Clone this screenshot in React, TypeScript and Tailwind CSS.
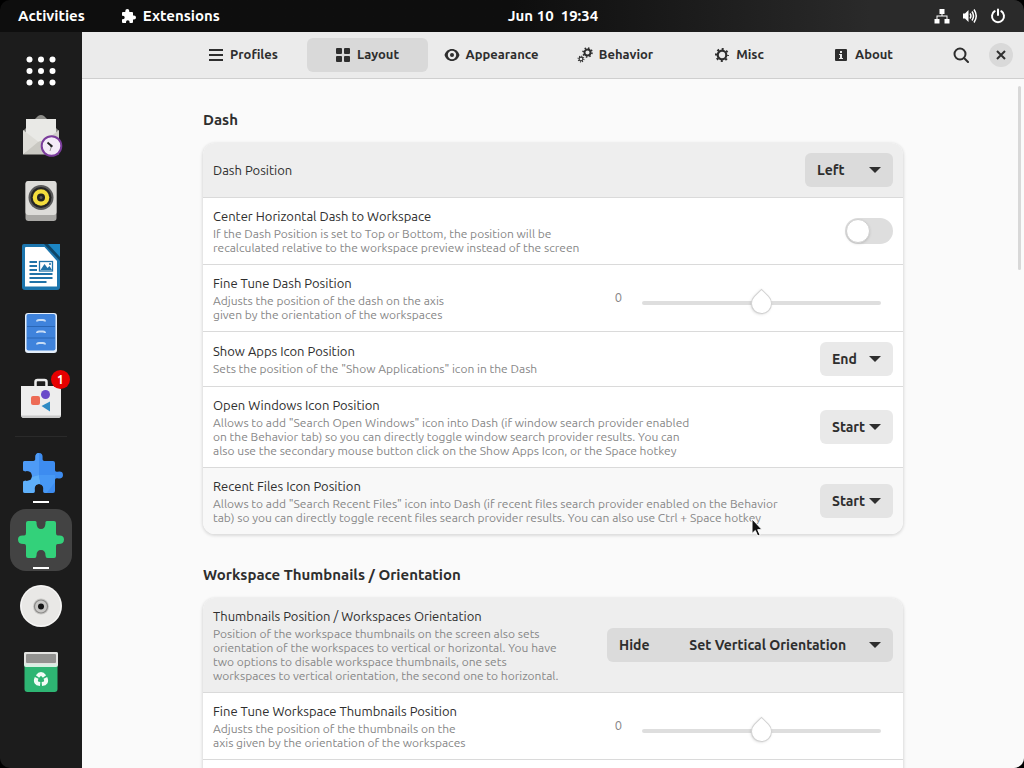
import React, { useState } from 'react';

const DASH_POSITIONS = ['Left', 'Right', 'Top', 'Bottom'];
const ICON_POSITIONS = ['Start', 'End', 'Hide'];
const THUMBNAIL_POSITIONS = [
  'Left',
  'Right',
  'Hide' + '\u00a0'.repeat(12) + 'Set Vertical Orientation',
  'Hide' + '\u00a0'.repeat(12) + 'Set Horizontal Orientation',
];

// ---------- Symbolic icons ----------

const PuzzleIcon = () => (
  <svg viewBox="0 0 16 16" className="size-4" fill="currentColor">
    <path d="M6.3 1a2 2 0 0 1 2 2v1H11a1 1 0 0 1 1 1v2.6h1a2 2 0 0 1 0 4h-1V14a1 1 0 0 1-1 1H8.600v-.9a1.800 1.800 0 0 0-3.600 0v.9H2a1 1 0 0 1-1-1v-2.700h.9a1.800 1.800 0 0 0 0-3.600H1V5a1 1 0 0 1 1-1h2.300V3a2 2 0 0 1 2-2z" />
  </svg>
);

const MenuIcon = () => (
  <svg viewBox="0 0 16 16" className="size-4" fill="currentColor">
    <path d="M1 2h14v2H1zM1 7h14v2H1zM1 12h14v2H1z" />
  </svg>
);

const GridIcon = () => (
  <svg viewBox="0 0 16 16" className="size-4" fill="currentColor">
    <rect x="1" y="1" width="6" height="6" rx="1" />
    <rect x="9" y="1" width="6" height="6" rx="1" />
    <rect x="1" y="9" width="6" height="6" rx="1" />
    <rect x="9" y="9" width="6" height="6" rx="1" />
  </svg>
);

const EyeIcon = () => (
  <svg viewBox="0 0 16 16" className="size-4" fill="currentColor">
    <path fillRule="evenodd" d="M8 2C4.500 2 1.600 4.200.5 8c1.100 3.800 4 6 7.500 6s6.400-2.200 7.500-6C14.400 4.200 11.500 2 8 2zm0 1.800a4.200 4.200 0 1 1 0 8.400 4.200 4.200 0 0 1 0-8.400z" />
    <circle cx="8" cy="8" r="2" />
  </svg>
);

const GearsIcon = () => (
  <svg viewBox="0 0 16 16" className="size-4" fill="none" stroke="currentColor">
    <circle cx="10.500" cy="5.500" r="3" strokeWidth="1.900" />
    <circle cx="10.500" cy="5.500" r="4.500" strokeWidth="1.600" strokeDasharray="1.500 2.034" />
    <circle cx="4" cy="12" r="1.900" strokeWidth="1.100" />
    <circle cx="4" cy="12" r="2.900" strokeWidth="1.100" strokeDasharray="1 1.277" />
  </svg>
);

const GearIcon = () => (
  <svg viewBox="0 0 16 16" className="size-4" fill="none" stroke="currentColor">
    <circle cx="8" cy="8" r="4.300" strokeWidth="2.200" />
    <circle cx="8" cy="8" r="6" strokeWidth="2" strokeDasharray="2 2.712" strokeDashoffset="1" />
  </svg>
);

const InfoIcon = () => (
  <svg viewBox="0 0 16 16" className="size-4">
    <rect x="2" y="2" width="12" height="12" rx="1" fill="currentColor" />
    <path d="M7 4h2v2H7zM6 7h3v4h1v1H6v-1h1V8H6z" fill="#ebebeb" />
  </svg>
);

const SearchIcon = () => (
  <svg viewBox="0 0 16 16" className="size-4" fill="none" stroke="currentColor" strokeWidth="2">
    <circle cx="7" cy="7" r="5.500" />
    <path d="M11 11l4 4" strokeLinecap="round" />
  </svg>
);

const NetworkIcon = () => (
  <svg viewBox="0 0 16 16" className="size-4" fill="currentColor">
    <path d="M5.500 1h5v5H8.500v1.500h5V11H15.500v4.500h-5V11h2V8.500h-9V11h2v4.500h-5V11h2V7.500h5V6h-2z" />
  </svg>
);

const VolumeIcon = () => (
  <svg viewBox="0 0 16 16" className="size-4" fill="none" stroke="currentColor" strokeWidth="1.500">
    <path d="M1 5.500h2L6.500 2v12L3 10.500H1z" fill="currentColor" stroke="none" />
    <path d="M8 5.500q1.800 2.500 0 5M10 3.500q3 4.500 0 9M12 1.500q4.500 6.500 0 13" />
  </svg>
);

const PowerIcon = () => (
  <svg viewBox="0 0 16 16" className="size-4" fill="none" stroke="currentColor" strokeWidth="2" strokeLinecap="round">
    <path d="M4.700 3.200a6 6 0 1 0 6.600 0M8 1.500v5.500" />
  </svg>
);

// ---------- Dash icons ----------

const AppsIcon = () => (
  <svg viewBox="0 0 48 48" className="size-12" fill="#fff">
    {[12.500, 24, 35.500].map((y) =>
      [12.500, 24, 35.500].map((x) => <circle key={`${x}-${y}`} cx={x} cy={y + 1} r="3" />)
    )}
  </svg>
);

const MailIcon = () => (
  <svg viewBox="0 0 48 48" className="size-12">
    <path d="M6 20L21 5q3-2 6 0l15 15v22a1 1 0 0 1-1 1H7a1 1 0 0 1-1-1z" fill="#8f8f8b" />
    <rect x="9" y="8" width="30" height="28" fill="#e9e9e6" />
    <path d="M6 19l17 13L6 43.500z" fill="#deddd8" />
    <path d="M42 19L25 32l17 11z" fill="#d0cfca" />
    <path d="M6 43.500L21 31q3-2 6 0l15 12.500z" fill="#c9c8c2" />
    <circle cx="34.500" cy="35" r="9.800" fill="#f4ecf8" stroke="#7b3d9c" strokeWidth="2" />
    <path d="M30.500 31.500l4 3.500" stroke="#222" strokeWidth="1.800" />
    <path d="M34.500 35l-1.500 5" stroke="#999" strokeWidth="1" />
    <circle cx="34.500" cy="35" r="1.200" fill="#222" />
  </svg>
);

const SpeakerIcon = () => (
  <svg viewBox="0 0 48 48" className="size-12">
    <rect x="8.500" y="4" width="31" height="40" rx="3" fill="#a9a8a5" />
    <rect x="8.500" y="4" width="31" height="34" rx="3" fill="#dddcd9" />
    <circle cx="24" cy="20.500" r="12.500" fill="#5a5a5a" />
    <circle cx="24" cy="20.500" r="10.500" fill="#252525" />
    <circle cx="24" cy="20.500" r="8.300" fill="#f4dd3d" />
    <circle cx="24" cy="20.500" r="4" fill="#222" />
    <circle cx="24" cy="20.500" r="1.500" fill="#555" />
  </svg>
);

const WriterIcon = () => (
  <svg viewBox="0 0 48 48" className="size-12">
    <path d="M7 1h22l14 15v28a3 3 0 0 1-3 3H8a3 3 0 0 1-3-3V3a2 2 0 0 1 2-2z" fill="#1c75ad" />
    <path d="M9 4h18.500L40 18v25.500H8V5a1 1 0 0 1 1-1z" fill="#fff" />
    <path d="M30 1h13v14z" fill="#1c86c4" />
    <path d="M27 1l16 17v-4L31 1z" fill="#0e4668" />
    <path d="M12.500 19h7.500M12.500 23h7.500M12.500 27h7.500M12.500 31h23M12.500 35h23M12.500 39h17" stroke="#2173a8" strokeWidth="1.800" />
    <rect x="22.500" y="18.500" width="13" height="9.500" fill="#fff" stroke="#2173a8" strokeWidth="1.300" />
    <path d="M23.500 27l4-6 3 4 2-2 2.500 4z" fill="#2173a8" />
    <circle cx="33" cy="21" r="1" fill="#2173a8" />
  </svg>
);

const CabinetIcon = () => (
  <svg viewBox="0 0 48 48" className="size-12">
    <rect x="8" y="4" width="32" height="40" rx="3" fill="#e4eefa" />
    <rect x="9.500" y="5" width="29" height="36.500" rx="2" fill="#3f83dc" />
    <path d="M10 17.500h28M10 29h28" stroke="#2a66b5" strokeWidth="1" />
    <path d="M20 12.500q0-1.500 2-1.500h4q2 0 2 1.500M20 24q0-1.500 2-1.500h4q2 0 2 1.500M20 35.500q0-1.500 2-1.500h4q2 0 2 1.500" fill="none" stroke="#c7dcf5" strokeWidth="2" />
  </svg>
);

const SoftwareIcon = () => (
  <svg viewBox="0 0 48 48" className="size-12">
    <path d="M18.500 12V7q0-2 2-2h7q2 0 2 2v5" fill="none" stroke="#ececec" strokeWidth="2.500" />
    <path d="M4 11h40v29a3 3 0 0 1-3 3H7a3 3 0 0 1-3-3z" fill="#ededed" />
    <path d="M4 40.500q1 2.500 3 2.500h34q2 0 3-2.500z" fill="#c9c9c9" />
    <rect x="14" y="21" width="9" height="9" rx="2" fill="#ed6b55" />
    <circle cx="28.500" cy="19.500" r="4.500" fill="#6a4bc9" />
    <path d="M33 26.500v10L24.500 31z" fill="#2f8bc4" />
  </svg>
);

const BLUE_PUZZLE =
  'M8 11h8.500q2.300 0 1.900-3Q18 3 22 3t3.600 5q-.4 3 1.900 3H36q2 0 2 2v7q0 2.300 2.500 1.700 5.500-1 5.500 3.300t-5.500 3.300Q38 27.700 38 30v11q0 2-2 2h-7.500q-2.500 0-2.200-2.500.7-6.500-4.300-6.500t-4.300 6.500q.3 2.500-2.200 2.500H8q-2 0-2-2v-8q0-2.500 2.500-2.200 6.500.7 6.500-4.800t-6.500-4.800Q6 21.500 6 19v-6q0-2 2-2z';

const BluePuzzleIcon = () => (
  <svg viewBox="0 0 48 48" className="size-12">
    <clipPath id="blue-puzzle">
      <path d={BLUE_PUZZLE} />
    </clipPath>
    <g clipPath="url(#blue-puzzle)">
      <rect width="48" height="48" fill="#3d8cf0" />
      <path d="M0 0h22v25L0 31z" fill="#4e9bf6" />
      <path d="M22 25L0 31v17h26z" fill="#5fb0fa" />
      <path d="M22 25h16v7L26 48z" fill="#4798f5" />
    </g>
  </svg>
);

const GreenPuzzleIcon = () => (
  <svg viewBox="0 0 48 48" className="size-12">
    <path d="M11 5h7q2 0 1.500 2.500Q20 13 24 13t4.500-5.500Q28 5 30 5h7q2 0 2 2v10q0 3 2.500 2.500Q47 19 47 23.500T41.500 28Q39 27.500 39 30v10q0 2-2 2h-6.500q-2 0-2-2.500 0-5.500-4.500-5.500t-4.500 5.500q0 2.500-2 2.500H11q-2 0-2-2V30q0-2.500-2.500-2Q1 28 1 23.500t5.500-4Q9 20 9 17V7q0-2 2-2z" fill="#33d17a" />
  </svg>
);

const DiscIcon = () => (
  <svg viewBox="0 0 48 48" className="size-12">
    <circle cx="24" cy="24" r="21" fill="#e9e8e6" />
    <circle cx="24" cy="24" r="20" fill="none" stroke="#fafafa" strokeWidth="1" />
    <circle cx="24" cy="24.500" r="8" fill="#c8c7c5" />
    <circle cx="24" cy="24.500" r="6.500" fill="none" stroke="#8c8b89" strokeWidth="1.200" />
    <circle cx="24" cy="24.500" r="3" fill="#161616" />
  </svg>
);

const TrashIcon = () => (
  <svg viewBox="0 0 48 48" className="size-12">
    <path d="M7.500 16h33v25a3 3 0 0 1-3 3h-27a3 3 0 0 1-3-3z" fill="#2eb573" />
    <rect x="7" y="4" width="34" height="15" rx="2" fill="#d8f0e3" />
    <rect x="7" y="4" width="34" height="12" rx="2" fill="#e3e3e1" />
    <rect x="9" y="6" width="30" height="9" rx="1" fill="#929290" />
    <g fill="none" stroke="#f2fbf6" strokeWidth="4">
      <path d="M20.500 28.500q3.500-5 7 0" />
      <path d="M20.500 28.500q3.500-5 7 0" transform="rotate(120 24 31.500)" />
      <path d="M20.500 28.500q3.500-5 7 0" transform="rotate(240 24 31.500)" />
    </g>
  </svg>
);

// ---------- Shell ----------

const TopBar: React.FC = () => (
  <header className="flex h-8 shrink-0 items-center bg-linear-to-r from-[#0e0e0e] from-50% to-[#2a2a2a] to-85% px-[18px] text-[15px] font-bold text-white">
    <div className="flex flex-1 items-center gap-9">
      <button>Activities</button>
      <button className="flex items-center gap-[6px]">
        <PuzzleIcon />
        Extensions
      </button>
    </div>
    <button className="ml-[82px] whitespace-pre">{'Jun 10  19:34'}</button>
    <button aria-label="System menu" className="flex flex-1 items-center justify-end gap-3">
      <NetworkIcon />
      <VolumeIcon />
      <PowerIcon />
    </button>
  </header>
);

type DashItemProps = {
  label: string;
  icon: React.ReactNode;
  running?: boolean;
  active?: boolean;
  badge?: number;
};

const DashItem: React.FC<DashItemProps> = ({ label, icon, running, active, badge }) => (
  <button
    aria-label={label}
    className={`relative flex size-[62px] shrink-0 items-center justify-center rounded-2xl ${active ? 'bg-[#434343]' : ''}`}
  >
    {icon}
    {badge && (
      <span className="absolute top-[2px] right-[2px] flex size-[19px] items-center justify-center rounded-full bg-[#e60000] text-xs font-bold text-white">
        {badge}
      </span>
    )}
    {running && <span className="absolute bottom-0.5 h-0.5 w-4 bg-white" />}
  </button>
);

const Dash: React.FC = () => (
  <nav className="flex w-[82px] shrink-0 flex-col items-center gap-1 bg-[#1c1c1c] pt-2">
    <button aria-label="Show Applications" className="flex h-[60px] w-[62px] items-center justify-center">
      <AppsIcon />
    </button>
    <DashItem label="Evolution" icon={<MailIcon />} />
    <DashItem label="Rhythmbox" icon={<SpeakerIcon />} />
    <DashItem label="LibreOffice Writer" icon={<WriterIcon />} />
    <DashItem label="Files" icon={<CabinetIcon />} />
    <DashItem label="Software" icon={<SoftwareIcon />} badge={1} />
    <div className="my-[2px] h-px w-[52px] shrink-0 bg-[#2a2a2a]" />
    <DashItem label="Extension Manager" icon={<BluePuzzleIcon />} running />
    <DashItem label="Extensions" icon={<GreenPuzzleIcon />} running active />
    <DashItem label="Disc" icon={<DiscIcon />} />
    <DashItem label="Trash" icon={<TrashIcon />} />
  </nav>
);

// ---------- Preferences window ----------

const TABS = [
  { name: 'Profiles', icon: <MenuIcon /> },
  { name: 'Layout', icon: <GridIcon /> },
  { name: 'Appearance', icon: <EyeIcon /> },
  { name: 'Behavior', icon: <GearsIcon /> },
  { name: 'Misc', icon: <GearIcon /> },
  { name: 'About', icon: <InfoIcon /> },
];

const WindowHeader: React.FC<{ tab: string; onSelect: (tab: string) => void }> = ({ tab, onSelect }) => (
  <div className="flex h-[47px] shrink-0 items-center border-b border-[#cfcfcf] bg-[#ebebeb] px-[11px]">
    <div className="flex-1" />
    <div className="flex gap-[3px]">
      {TABS.map(({ name, icon }) => (
        <button
          key={name}
          onClick={() => onSelect(name)}
          className={`flex h-[34px] w-[121px] items-center justify-center gap-[6px] rounded-md font-bold ${tab === name ? 'bg-[#d9d9d9]' : ''}`}
        >
          {icon}
          {name}
        </button>
      ))}
    </div>
    <div className="flex flex-1 items-center justify-end gap-5">
      <button aria-label="Search">
        <SearchIcon />
      </button>
      <button aria-label="Close" className="flex size-6 items-center justify-center rounded-full bg-[#d9d9d9]">
        <svg viewBox="0 0 16 16" className="size-4" stroke="currentColor" strokeWidth="2">
          <path d="M4 4l8 8M12 4l-8 8" />
        </svg>
      </button>
    </div>
  </div>
);

type RowProps = {
  id: string;
  title: string;
  text?: string;
  className?: string;
  children?: React.ReactNode;
};

const Row: React.FC<RowProps> = ({ id, title, text, className = 'py-[9px]', children }) => (
  <div className={`flex min-h-[55px] items-center justify-between px-[10px] ${className}`}>
    <label htmlFor={id} className="flex flex-col gap-[2px]">
      <span className="leading-[18px]">{title}</span>
      {text && <span className="text-xs leading-[14px] whitespace-pre text-[#878787]">{text}</span>}
    </label>
    {children}
  </div>
);

type DropDownProps = {
  id: string;
  options: string[];
  initial: string;
  className: string;
};

const DropDown: React.FC<DropDownProps> = ({ id, options, initial, className }) => {
  const [value, setValue] = useState(initial);
  return (
    <div className="relative shrink-0">
      <select
        id={id}
        value={value}
        onChange={(e) => setValue(e.target.value)}
        className={`block h-[34px] appearance-none rounded-md pl-3 text-sm font-bold ${className}`}
      >
        {options.map((option) => (
          <option key={option}>{option}</option>
        ))}
      </select>
      <svg viewBox="0 0 12 6" className="pointer-events-none absolute top-[14px] right-3 h-[6px] w-3" fill="#2e2e2e">
        <path d="M0 0h12L6 6z" />
      </svg>
    </div>
  );
};

const Slider: React.FC<{ id: string }> = ({ id }) => {
  const [value, setValue] = useState(0);
  return (
    <div className="flex shrink-0 items-center gap-5 pr-3">
      <output htmlFor={id} className="text-[13px] text-[#878787]">{value}</output>
      <input
        id={id}
        type="range"
        min={-100}
        max={100}
        value={value}
        onChange={(e) => setValue(Number(e.target.value))}
        className="mt-[10px] h-1 w-[239px] appearance-none rounded-full bg-[#dedede] [&::-webkit-slider-thumb]:size-[21px] [&::-webkit-slider-thumb]:rotate-45 [&::-webkit-slider-thumb]:appearance-none [&::-webkit-slider-thumb]:rounded-full [&::-webkit-slider-thumb]:rounded-tl-[2px] [&::-webkit-slider-thumb]:border [&::-webkit-slider-thumb]:border-[#d2d2d2] [&::-webkit-slider-thumb]:bg-white [&::-webkit-slider-thumb]:shadow-sm"
      />
    </div>
  );
};

const Switch: React.FC<{ id: string }> = ({ id }) => (
  <input
    id={id}
    type="checkbox"
    className="h-[26px] w-12 shrink-0 appearance-none rounded-full bg-[#dedede] p-px before:block before:size-6 before:rounded-full before:border before:border-[#d0d0d0] before:bg-white before:shadow-sm checked:bg-[#3584e4] checked:before:ml-[22px]"
  />
);

const Group: React.FC<{ title: string; children: React.ReactNode }> = ({ title, children }) => (
  <section className="flex flex-col gap-[13px]">
    <h2 className="text-[15px] leading-5 font-bold">{title}</h2>
    <div className="divide-y divide-[#dadada] overflow-hidden rounded-xl bg-white shadow-[0_1px_3px_1px_rgba(0,0,0,0.12)]">
      {children}
    </div>
  </section>
);

const LayoutPage: React.FC = () => (
  <div className="mx-auto flex w-full max-w-[700px] flex-col gap-[31px] pt-[31px]">
    <Group title="Dash">
      <Row id="dash-position" title="Dash Position" className="bg-[#eeeeee]">
        <DropDown id="dash-position" options={DASH_POSITIONS} initial="Left" className="w-[88px] bg-[#dbdbdb]" />
      </Row>
      <Row
        id="center-dash"
        title="Center Horizontal Dash to Workspace"
        text={'If the Dash Position is set to Top or Bottom, the position will be\nrecalculated relative to the workspace preview instead of the screen'}
      >
        <Switch id="center-dash" />
      </Row>
      <Row
        id="fine-tune-dash"
        title="Fine Tune Dash Position"
        text={'Adjusts the position of the dash on the axis\ngiven by the orientation of the workspaces'}
      >
        <Slider id="fine-tune-dash" />
      </Row>
      <Row id="show-apps" title="Show Apps Icon Position" text={'Sets the position of the "Show Applications" icon in the Dash'}>
        <DropDown id="show-apps" options={ICON_POSITIONS} initial="End" className="w-[73px] bg-[#e9e9e9]" />
      </Row>
      <Row
        id="open-windows"
        title="Open Windows Icon Position"
        text={'Allows to add "Search Open Windows" icon into Dash (if window search provider enabled\non the Behavior tab) so you can directly toggle window search provider results. You can\nalso use the secondary mouse button click on the Show Apps Icon, or the Space hotkey'}
      >
        <DropDown id="open-windows" options={ICON_POSITIONS} initial="Start" className="w-[73px] bg-[#e9e9e9]" />
      </Row>
      <Row
        id="recent-files"
        title="Recent Files Icon Position"
        text={'Allows to add "Search Recent Files" icon into Dash (if recent files search provider enabled on the Behavior\ntab) so you can directly toggle recent files search provider results. You can also use Ctrl + Space hotkey'}
        className="bg-[#f8f8f8] py-[9px]"
      >
        <DropDown id="recent-files" options={ICON_POSITIONS} initial="Start" className="w-[73px] bg-[#e4e4e4]" />
      </Row>
    </Group>

    <Group title="Workspace Thumbnails / Orientation">
      <Row
        id="thumbnails-position"
        title="Thumbnails Position / Workspaces Orientation"
        text={'Position of the workspace thumbnails on the screen also sets\norientation of the workspaces to vertical or horizontal. You have\ntwo options to disable workspace thumbnails, one sets\nworkspaces to vertical orientation, the second one to horizontal.'}
        className="bg-[#eeeeee] py-[9px]"
      >
        <DropDown
          id="thumbnails-position"
          options={THUMBNAIL_POSITIONS}
          initial={THUMBNAIL_POSITIONS[2]}
          className="w-[286px] bg-[#dbdbdb]"
        />
      </Row>
      <Row
        id="fine-tune-thumbnails"
        title="Fine Tune Workspace Thumbnails Position"
        text={'Adjusts the position of the thumbnails on the\naxis given by the orientation of the workspaces'}
      >
        <Slider id="fine-tune-thumbnails" />
      </Row>
      <div className="h-14" />
    </Group>
  </div>
);

const App: React.FC = () => {
  const [tab, setTab] = useState('Layout');

  return (
    <div className="h-screen bg-black font-['Ubuntu','Noto_Sans',sans-serif] text-[13px] text-[#2e2e2e]">
      <div className="relative flex h-full flex-col overflow-hidden rounded-[10px]">
        <TopBar />
        <div className="flex min-h-0 flex-1">
          <Dash />
          <div className="flex min-w-0 flex-1 flex-col bg-[#fafafa]">
            <WindowHeader tab={tab} onSelect={setTab} />
            <main className="relative min-h-0 flex-1 overflow-hidden">
              <LayoutPage />
              <div className="absolute top-[7px] right-[3px] h-[184px] w-[3px] rounded-full bg-[#d8d8d8]" />
            </main>
          </div>
        </div>

        {/* Pointer */}
        <svg viewBox="0 0 12 19" className="pointer-events-none absolute top-[518px] left-[751px] h-[19px] w-3">
          <path d="M1 1v14.500l3.300-3 2.400 5.500 2.400-1-2.400-5.300h4.400z" fill="#111" stroke="#fff" strokeWidth="1" />
        </svg>
      </div>
    </div>
  );
};

export default App;
